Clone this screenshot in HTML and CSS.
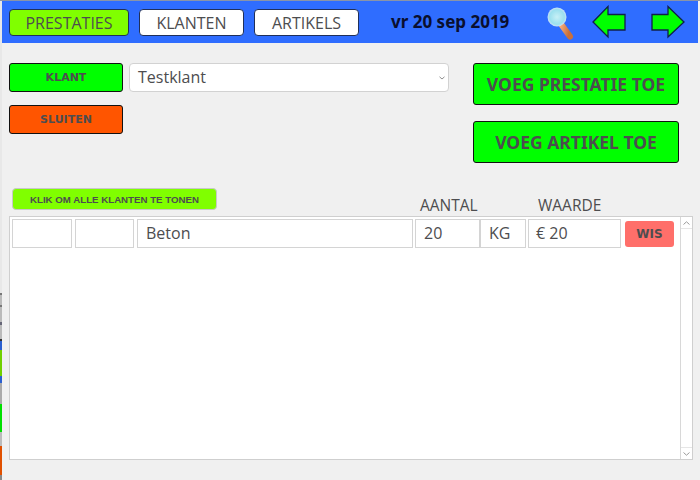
FILE: index.html
```html
<!DOCTYPE html>
<html lang="nl">
<head>
<meta charset="utf-8">
<title>Prestaties</title>
<link rel="stylesheet" href="styles.css">
</head>
<body>
<div class="app">
  <div class="edge"></div>
  <div class="main">
    <header class="topbar">
      <button class="tab tab-active">PRESTATIES</button>
      <button class="tab tab-klanten">KLANTEN</button>
      <button class="tab tab-artikels">ARTIKELS</button>
      <div class="date">vr 20 sep 2019</div>
      <svg class="search" width="32" height="36" viewBox="0 0 32 36">
        <defs>
          <radialGradient id="lens" cx="0.5" cy="0.5" r="0.55">
            <stop offset="0" stop-color="#c8f0f6"/>
            <stop offset="0.7" stop-color="#9be0ee"/>
            <stop offset="1" stop-color="#dfe2fb"/>
          </radialGradient>
          <linearGradient id="handle" x1="0" y1="0" x2="1" y2="0.4">
            <stop offset="0" stop-color="#f4ac7c"/>
            <stop offset="1" stop-color="#c9703a"/>
          </linearGradient>
        </defs>
        <line x1="14" y1="19" x2="23" y2="31.5" stroke="url(#handle)" stroke-width="6" stroke-linecap="round"/>
        <circle cx="10" cy="12" r="9.5" fill="url(#lens)"/>
      </svg>
      <svg class="arrow arrow-left" width="34" height="34" viewBox="0 0 34 34">
        <path d="M1 17 L16 1.5 V9.5 H33 V25 H16 V32 Z" fill="#00ff00" stroke="#10204a" stroke-width="1.3"/>
      </svg>
      <svg class="arrow arrow-right" width="34" height="34" viewBox="0 0 34 34">
        <path d="M33 17 L17 1.5 V9.5 H1 V25 H17 V32 Z" fill="#00ff00" stroke="#10204a" stroke-width="1.3"/>
      </svg>
    </header>
    <section class="controls">
      <div class="left-controls">
        <div class="klant-row">
          <button class="btn small green">KLANT</button>
          <div class="select">Testklant<svg class="chev" width="6" height="4" viewBox="0 0 6 4"><path d="M0.5 0.8 L3 3 L5.5 0.8" fill="none" stroke="#909090" stroke-width="1"/></svg></div>
        </div>
        <button class="btn small orange">SLUITEN</button>
      </div>
      <div class="right-controls">
        <button class="btn big green">VOEG PRESTATIE TOE</button>
        <button class="btn big green">VOEG ARTIKEL TOE</button>
      </div>
    </section>
    <section class="list-head">
      <button class="show-all">KLIK OM ALLE KLANTEN TE TONEN</button>
      <div class="col-label label-aantal">AANTAL</div>
      <div class="col-label label-waarde">WAARDE</div>
    </section>
    <section class="list">
      <div class="rows">
        <div class="row">
          <div class="cell c1"></div>
          <div class="cell c2"></div>
          <div class="cell c3">Beton</div>
          <div class="cell c4">20</div>
          <div class="cell c5">KG</div>
          <div class="cell c6">€ 20</div>
          <button class="wis">WIS</button>
        </div>
      </div>
      <div class="scrollbar">
        <div class="sb-btn"><svg width="7" height="4" viewBox="0 0 7 4"><path d="M0.5 3.5 L3.5 0.8 L6.5 3.5" fill="none" stroke="#9a9a9a"/></svg></div>
        <div class="sb-track"></div>
        <div class="sb-btn"><svg width="7" height="4" viewBox="0 0 7 4"><path d="M0.5 0.5 L3.5 3.2 L6.5 0.5" fill="none" stroke="#9a9a9a"/></svg></div>
      </div>
    </section>
  </div>
</div>
</body>
</html>
```
FILE: styles.css
```css
* { box-sizing: border-box; }
html, body { margin: 0; padding: 0; }
body {
  width: 700px;
  height: 480px;
  overflow: hidden;
  background: #f0f0f0;
  font-family: "Open Sans", "Noto Sans", sans-serif;
  color: #4d4d4f;
}
button { font-family: inherit; padding: 0; cursor: pointer; }
.app { display: flex; height: 480px; border-top: 1px solid #8a94a8; }
.edge {
  width: 2px;
  flex: none;
  background: linear-gradient(to bottom,
    #e8e8e8 0, #e8e8e8 292px, #777 292px, #777 294px, #bbb 294px, #bbb 304px,
    #777 304px, #777 306px, #bbb 306px, #bbb 321px, #667 321px, #667 324px,
    #bbb 324px, #bbb 338px, #333 338px, #333 340px,
    #2a5fd0 340px, #2a5fd0 349px, #70d000 349px, #70d000 375px, #2a5fd0 375px, #2a5fd0 382px,
    #aaa 382px, #aaa 403px, #00e000 403px, #00e000 431px,
    #bbb 431px, #bbb 445px, #e05000 445px, #e05000 474px, #888 474px);
}
.main { flex: 1; min-width: 0; display: flex; flex-direction: column; }

.topbar {
  height: 42px;
  background: #2f6dff;
  display: flex;
  align-items: flex-start;
  padding: 0 0 0 7px;
  margin-right: 2px;
}
.tab {
  height: 27px;
  width: 105px;
  margin-right: 10px;
  margin-top: 8px;
  background: #fff;
  border: 1px solid #20305a;
  border-radius: 4px;
  font-size: 16px;
  color: #4d4d4f;
}
.tab-active { width: 120px; background: #80ff00; }
.date {
  margin: 10px 0 0 22px;
  width: 156px;
  font-family: "Noto Sans", sans-serif;
  font-weight: 700;
  font-size: 17px;
  line-height: 22px;
  color: #0a0f2e;
  white-space: nowrap;
}
.search { flex: none; margin-top: 4px; }
.arrow { flex: none; margin-top: 4px; }
.arrow-left { margin-left: 13px; }
.arrow-right { margin-left: 25px; }

.controls { display: flex; height: 140px; padding: 20px 0 0 7px; }
.left-controls { width: 464px; display: flex; flex-direction: column; gap: 13px; }
.klant-row { display: flex; align-items: center; gap: 6px; }
.btn {
  border: 1px solid #111;
  border-radius: 3px;
  font-weight: 700;
  color: #4d4d4f;
}
.green { background: #00ff00; }
.orange { background: #ff5500; }
.small {
  width: 114px;
  height: 29px;
  font-family: "DejaVu Sans", sans-serif;
  font-size: 11px;
}
.select {
  width: 320px;
  height: 29px;
  background: #fff;
  border: 1px solid #d2d2d2;
  border-radius: 4px;
  font-size: 16px;
  line-height: 25px;
  padding-left: 8px;
  display: flex;
  justify-content: space-between;
  align-items: center;
}
.chev { margin-right: 3px; }
.right-controls { display: flex; flex-direction: column; gap: 16px; }
.big {
  width: 206px;
  height: 42px;
  font-family: "Noto Sans", sans-serif;
  font-size: 17.5px;
}

.list-head { display: flex; align-items: flex-end; height: 31px; padding-left: 10px; margin-top: 2px; }
.show-all {
  width: 205px;
  height: 22px;
  background: #80ff00;
  border: 1px solid #c8c8c8;
  border-radius: 4px;
  font-family: "Liberation Sans", sans-serif;
  font-weight: 700;
  font-size: 9.7px;
  color: #4d4d4f;
  margin-bottom: 6px;
}
.col-label { font-size: 15.5px; line-height: 22px; }
.label-aantal { margin-left: 203px; width: 118px; }

.list {
  height: 244px;
  margin: 0 0 0 7px;
  width: 684px;
  background: #fff;
  border: 1px solid #cfcfcf;
  display: flex;
}
.rows { flex: 1; padding: 2px; }
.row { display: flex; align-items: flex-start; }
.cell {
  height: 29px;
  background: #fff;
  border: 1px solid #d4d4d4;
  font-size: 16px;
  line-height: 27px;
  padding-left: 8px;
}
.c1 { width: 60px; margin-right: 3px; }
.c2 { width: 59px; margin-right: 3px; }
.c3 { width: 276px; margin-right: 2px; }
.c4 { width: 65px; }
.c5 { width: 46px; margin-right: 2px; }
.c6 { width: 93px; padding-left: 7px; }
.wis {
  width: 49px;
  height: 26px;
  margin: 2px 0 0 4px;
  background: #ff6f6a;
  border: none;
  border-radius: 3px;
  font-family: "DejaVu Sans", sans-serif;
  font-weight: 700;
  font-size: 12px;
  color: #4d4d4f;
}
.scrollbar { width: 12px; border-left: 1px solid #d8d8d8; display: flex; flex-direction: column; }
.sb-btn { height: 12px; display: flex; align-items: center; justify-content: center; background: #fff; }
.sb-btn:first-child { border-bottom: 1px solid #e6e6e6; }
.sb-btn:last-child { border-top: 1px solid #e6e6e6; }
.sb-track { flex: 1; }
```
